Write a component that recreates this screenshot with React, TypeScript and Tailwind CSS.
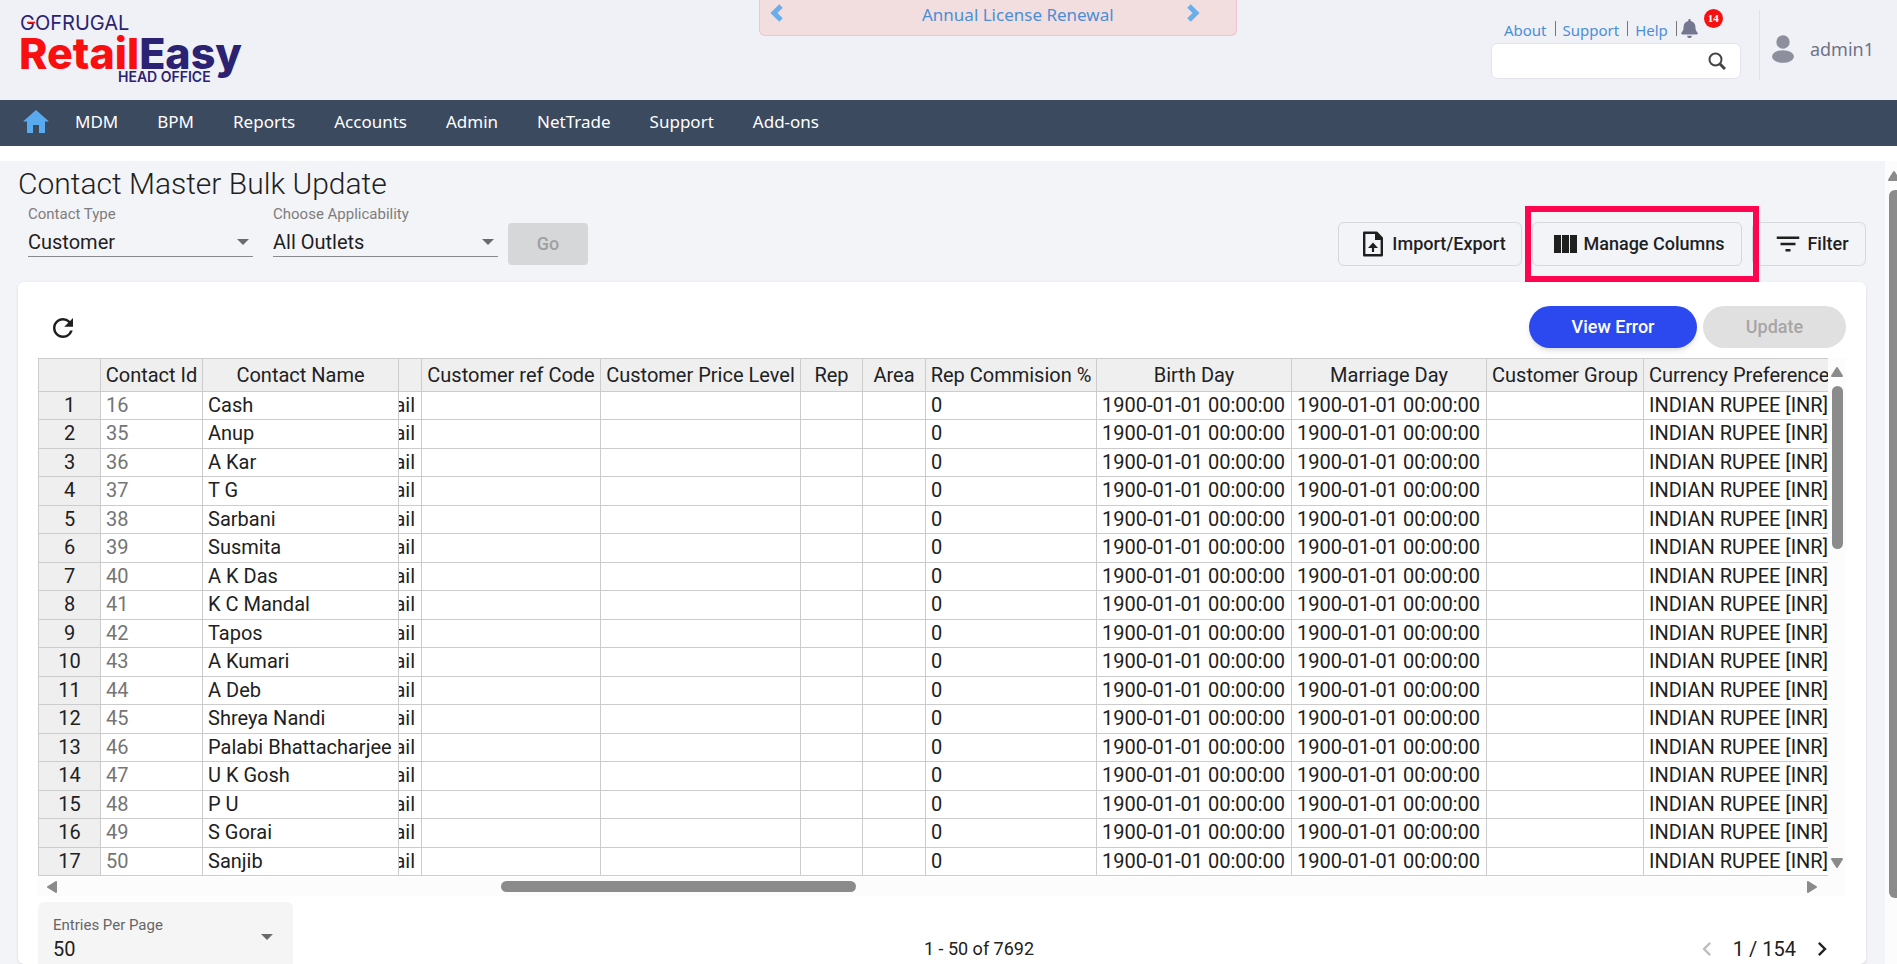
import { FaBell } from "react-icons/fa";
import { MdChevronLeft, MdChevronRight, MdFilterList, MdRefresh } from "react-icons/md";

const menuItems = [
  "MDM",
  "BPM",
  "Reports",
  "Accounts",
  "Admin",
  "NetTrade",
  "Support",
  "Add-ons",
];

const contacts = [
  { id: 16, name: "Cash" },
  { id: 35, name: "Anup" },
  { id: 36, name: "A Kar" },
  { id: 37, name: "T G" },
  { id: 38, name: "Sarbani" },
  { id: 39, name: "Susmita" },
  { id: 40, name: "A K Das" },
  { id: 41, name: "K C Mandal" },
  { id: 42, name: "Tapos" },
  { id: 43, name: "A Kumari" },
  { id: 44, name: "A Deb" },
  { id: 45, name: "Shreya Nandi" },
  { id: 46, name: "Palabi Bhattacharjee" },
  { id: 47, name: "U K Gosh" },
  { id: 48, name: "P U" },
  { id: 49, name: "S Gorai" },
  { id: 50, name: "Sanjib" },
];

const columns = [
  { title: "", width: "w-[63px]" },
  { title: "Contact Id", width: "w-[102px]" },
  { title: "Contact Name", width: "w-[196px]" },
  { title: "", width: "w-[23px]" },
  { title: "Customer ref Code", width: "w-[179px]" },
  { title: "Customer Price Level", width: "w-[200px]" },
  { title: "Rep", width: "w-[62px]" },
  { title: "Area", width: "w-[63px]" },
  { title: "Rep Commision %", width: "w-[171px]" },
  { title: "Birth Day", width: "w-[195px]" },
  { title: "Marriage Day", width: "w-[195px]" },
  { title: "Customer Group", width: "w-[157px]" },
  { title: "Currency Preference", width: "" },
];

const emptyDate = "1900-01-01 00:00:00";

const Logo = () => (
  <a href="#" aria-label="GoFrugal RetailEasy Head Office">
    <svg width="232" height="90" viewBox="0 0 232 90" fontFamily="Inter, sans-serif">
      <text x="0" y="30" fontSize="20" fill="#2b2273">
        GOFRUGAL
      </text>
      <path d="M7 22.5h8" stroke="#f01414" strokeWidth="1.6" />
      <text x="-1" y="69" fontSize="43" fontWeight="800" fill="#f90f0f">
        Retail
        <tspan fill="#2b2273">Easy</tspan>
      </text>
      <text x="98" y="82" fontSize="14" fontWeight="600" fill="#2b2273">
        HEAD OFFICE
      </text>
    </svg>
  </a>
);

const Chevron = ({ d }: { d: string }) => (
  <svg width="14" height="18" viewBox="0 0 14 18" fill="none">
    <path d={d} stroke="#6aaeea" strokeWidth="5" />
  </svg>
);

const UploadFileIcon = () => (
  <svg width="30" height="30" viewBox="0 0 30 30" fill="none" stroke="currentColor">
    <path d="M6.2 3.7h12.3l5.3 5.3v17.3H6.2z" strokeWidth="2.4" strokeLinejoin="round" />
    <path d="M17 3l8 8h-8z" fill="currentColor" stroke="none" />
    <path d="M15 23v-7" strokeWidth="2.2" />
    <path d="M15 13.5l5 5.5H10z" fill="currentColor" stroke="none" />
  </svg>
);

const Caret = ({ className }: { className: string }) => (
  <svg
    width="12"
    height="6"
    viewBox="0 0 12 6"
    className={`pointer-events-none absolute ${className}`}
  >
    <path d="M0 0h12L6 6z" fill="#6b6b6b" />
  </svg>
);

const Arrow = ({ d }: { d: string }) => (
  <svg width="12" height="12" viewBox="0 0 12 12" className="shrink-0">
    <path d={d} fill="#8b8b8b" stroke="#8b8b8b" strokeWidth="2" strokeLinejoin="round" />
  </svg>
);

const LinkDivider = () => <span className="mt-1 mr-[7px] ml-2 h-[15px] w-px bg-[#777]" />;

const Header = () => (
  <header className="flex h-[100px] bg-[#f0f1f7] font-['Noto_Sans',sans-serif]">
    <div className="w-2/5 pl-5">
      <Logo />
    </div>

    <div className="flex h-9 w-[478px] items-start justify-between rounded-b-md border border-t-0 border-[#f0c5cf] bg-[#f2dede] pt-[3px] pr-9 pl-2.5">
      <button type="button" aria-label="Previous" className="pt-px">
        <Chevron d="M11 2L4 9l7 7" />
      </button>
      <a href="#" className="pl-[66px] text-[17px] leading-6 text-[#4a8fd6]">
        Annual License Renewal
      </a>
      <button type="button" aria-label="Next" className="pt-px">
        <Chevron d="M3 2l7 7-7 7" />
      </button>
    </div>

    <div className="flex flex-1 justify-end pt-2.5 pr-[23px]">
      <div className="mr-[18px] w-[250px]">
        <div className="flex h-[33px] items-center pl-[13px] text-[15px] text-[#4a8fd6]">
          <a href="#" className="pt-2">About</a>
          <LinkDivider />
          <a href="#" className="pt-2">Support</a>
          <LinkDivider />
          <a href="#" className="pt-2">Help</a>
          <LinkDivider />
          <button type="button" aria-label="Notifications" className="relative mt-1 -ml-1 text-[#74778f]">
            <FaBell size={19} />
            <span className="absolute -top-2.5 left-6 flex size-[19px] items-center justify-center rounded-full bg-[#f51111] font-['Liberation_Serif',serif] text-[11px] font-bold text-white">
              14
            </span>
          </button>
        </div>
        <div className="flex h-9 items-center rounded-md border border-[#e3e3ec] bg-white pr-3.5">
          <input type="text" aria-label="Search" className="h-full min-w-0 flex-1 px-2 outline-none" />
          <button type="button" aria-label="Search">
            <svg width="18" height="18" viewBox="0 0 18 18" fill="none" stroke="#444">
              <circle cx="7.5" cy="7.5" r="6" strokeWidth="2" />
              <path d="M12 12l5 5" strokeWidth="3" />
            </svg>
          </button>
        </div>
      </div>
      <div className="flex h-[70px] items-center border-l border-[#e0e0e8] pl-3">
        <svg width="22" height="28" viewBox="0 0 22 28" fill="#8d8f9d" className="mt-2">
          <circle cx="11" cy="7" r="6.7" />
          <ellipse cx="11" cy="21.5" rx="11" ry="6.3" />
        </svg>
        <span className="ml-4 pt-2 text-lg text-[#6f7383]">admin1</span>
      </div>
    </div>
  </header>
);

const Toolbar = () => (
  <div className="flex items-start justify-between">
    <div className="flex">
      <div className="relative ml-2.5 w-[225px]">
        <label htmlFor="type" className="block text-[15px] leading-5 text-[#7d7d7d]">
          Contact Type
        </label>
        <select id="type" className="h-[33px] w-full appearance-none border-b border-[#8a8a8a] pt-1 text-xl text-[#1f1f1f]">
          <option>Customer</option>
        </select>
        <Caret className="top-[35px] right-1" />
      </div>
      <div className="relative ml-5 w-[225px]">
        <label htmlFor="outlet" className="block text-[15px] leading-5 text-[#7d7d7d]">
          Choose Applicability
        </label>
        <select id="outlet" className="h-[33px] w-full appearance-none border-b border-[#8a8a8a] pt-1 text-xl text-[#1f1f1f]">
          <option>All Outlets</option>
        </select>
        <Caret className="top-[35px] right-1" />
      </div>
      <button type="button" className="mt-[19px] ml-2.5 h-[42px] w-20 rounded bg-[#d6d7d9] text-lg font-medium text-[#9f9f9f]">
        Go
      </button>
    </div>

    <div className="mt-[18px] flex text-lg font-medium text-[#1f1f1f]">
      <button type="button" className="flex h-11 w-[184px] items-center justify-center gap-1 rounded-md border border-[#d6d8dc] pl-1">
        <UploadFileIcon />
        Import/Export
      </button>
      <div className="relative mx-2.5">
        <button type="button" className="flex h-11 w-[210px] items-center justify-center gap-1 rounded-md border border-[#d6d8dc] pl-1">
          <svg width="26" height="18" viewBox="0 0 26 18" fill="currentColor">
            <path d="M1 0h7v18H1zM9 0h7v18H9zM17 0h7v18h-7z" />
          </svg>
          Manage Columns
        </button>
        <div className="pointer-events-none absolute -top-4 -right-[17px] -bottom-4 -left-[7px] z-10 border-6 border-[#ff0550]" />
      </div>
      <button type="button" className="flex h-11 w-[114px] items-center justify-center gap-1 rounded-md border border-[#d6d8dc] pl-1">
        <MdFilterList size={30} />
        Filter
      </button>
    </div>
  </div>
);

const ContactTable = () => (
  <div>
    <div className="flex">
      <div className="min-w-0 flex-1 overflow-hidden pb-px">
        <table className="w-full table-fixed border-separate border-spacing-0 text-xl leading-6 whitespace-nowrap text-[#212121]">
          <thead>
            <tr className="h-[34px]">
              {columns.map((column, index) => (
                <th
                  key={index}
                  className={`${column.width} overflow-hidden border-t border-r border-b border-[#ccc] bg-[#efefef] p-0 font-normal first:border-l last:border-r-0 last:pl-[5px] last:text-left`}
                >
                  {column.title}
                </th>
              ))}
            </tr>
          </thead>
          <tbody className="[&_td]:overflow-hidden [&_td]:border-r [&_td]:border-b [&_td]:border-[#ccc] [&_td]:p-0 [&_td]:pt-px [&_td]:pl-[5px] [&_td]:align-top [&_td:last-child]:border-r-0">
            {contacts.map((contact, index) => (
              <tr key={contact.id} className="odd:h-7 even:h-[29px]">
                <th className="border-r border-b border-l border-[#ccc] bg-[#efefef] p-0 pt-px align-top font-normal">
                  {index + 1}
                </th>
                <td className="text-[#757575]">{contact.id}</td>
                <td>{contact.name}</td>
                <td>
                  <div className="-ml-[5px] flex justify-end overflow-hidden pr-1.5">Retail</div>
                </td>
                <td />
                <td />
                <td />
                <td />
                <td>0</td>
                <td>{emptyDate}</td>
                <td>{emptyDate}</td>
                <td />
                <td>INDIAN RUPEE [INR]</td>
              </tr>
            ))}
          </tbody>
        </table>
      </div>
      <div className="flex w-[18px] flex-col items-center bg-[#fcfcfc] py-2">
        <Arrow d="M6 2l5 8H1z" />
        <div className="mt-2 h-[163px] w-[11px] rounded-full bg-[#8b8b8b]" />
        <div className="flex-1" />
        <Arrow d="M6 10l5-8H1z" />
      </div>
    </div>
    <div className="flex h-[19px] items-center bg-[#fcfcfc] pr-7 pl-2">
      <Arrow d="M2 6l8-5v10z" />
      <div className="flex flex-1 pl-[443px]">
        <div className="h-[11px] w-[355px] rounded-full bg-[#8b8b8b]" />
      </div>
      <Arrow d="M10 6L2 1v10z" />
    </div>
  </div>
);

const Pagination = () => (
  <div className="mt-1.5 flex h-[62px] items-start text-[#212121]">
    <div className="w-[49%]">
      <div className="relative h-[62px] w-[255px] rounded-t-md bg-[#f5f5f5] px-[15px] pt-[13px]">
        <label htmlFor="entries" className="block text-[15px] leading-5 text-[#666]">
          Entries Per Page
        </label>
        <select id="entries" className="h-7 w-full appearance-none text-xl">
          <option>50</option>
        </select>
        <Caret className="top-8 right-5" />
      </div>
    </div>
    <p className="pt-[35px] text-lg leading-6">1 - 50 of 7692</p>
    <div className="flex flex-1 items-center justify-end pt-[33px] pr-2.5 text-xl">
      <button type="button" aria-label="Previous page" className="text-[#bdbdbd]">
        <MdChevronLeft size={28} />
      </button>
      <span className="mx-3">1 / 154</span>
      <button type="button" aria-label="Next page">
        <MdChevronRight size={28} />
      </button>
    </div>
  </div>
);

const App = () => {
  return (
    <div className="flex min-h-screen flex-col overflow-hidden bg-white font-[Roboto,sans-serif]">
      <Header />

      <nav className="flex h-[46px] items-center bg-[#3c4a60] pl-[23px] font-['Noto_Sans',sans-serif] text-[17px] text-white">
        <a href="#" aria-label="Home" className="mr-[26px] pb-1">
          <svg width="26" height="23" viewBox="0 0 26 23" fill="#5aaaf0">
            <path d="M13 0l13 11.5h-4V23h-6v-8h-6v8H4V11.5H0z" />
          </svg>
        </a>
        <div className="flex gap-[39px] pb-0.5">
          {menuItems.map((item) => (
            <a key={item} href="#">
              {item}
            </a>
          ))}
        </div>
      </nav>

      <div className="mt-[15px] flex flex-1">
        <main className="min-w-0 flex-1 bg-[#f3f4f7] pr-[19px] pl-[18px]">
          <h1 className="h-[43px] pt-[5px] text-3xl leading-9 font-light text-[#1f1f1f]">
            Contact Master Bulk Update
          </h1>
          <Toolbar />
          <section className="mt-4 rounded-md bg-white px-5 shadow">
            <div className="flex h-[76px] items-start justify-between pt-6">
              <button type="button" aria-label="Refresh" className="mt-[7px] ml-2.5 text-[#1f1f1f]">
                <MdRefresh size={30} />
              </button>
              <div className="flex gap-1.5 text-lg font-medium">
                <button type="button" className="h-[42px] w-[168px] rounded-full bg-[#2c49f0] text-white shadow-md">
                  View Error
                </button>
                <button type="button" className="h-[42px] w-[143px] rounded-full bg-[#e0e0e0] text-[#a6a6a6]">
                  Update
                </button>
              </div>
            </div>
            <ContactTable />
            <Pagination />
          </section>
        </main>
        <div className="flex w-3 flex-col items-end overflow-hidden bg-[#fcfcfc] pt-[9px]">
          <svg width="9" height="12" viewBox="0 0 9 12">
            <path d="M6 2l5 8H1z" fill="#8b8b8b" stroke="#8b8b8b" strokeWidth="2" strokeLinejoin="round" />
          </svg>
          <div className="mt-2 h-[708px] w-2 rounded-l-md bg-[#8b8b8b]" />
        </div>
      </div>
    </div>
  );
};

export default App;
